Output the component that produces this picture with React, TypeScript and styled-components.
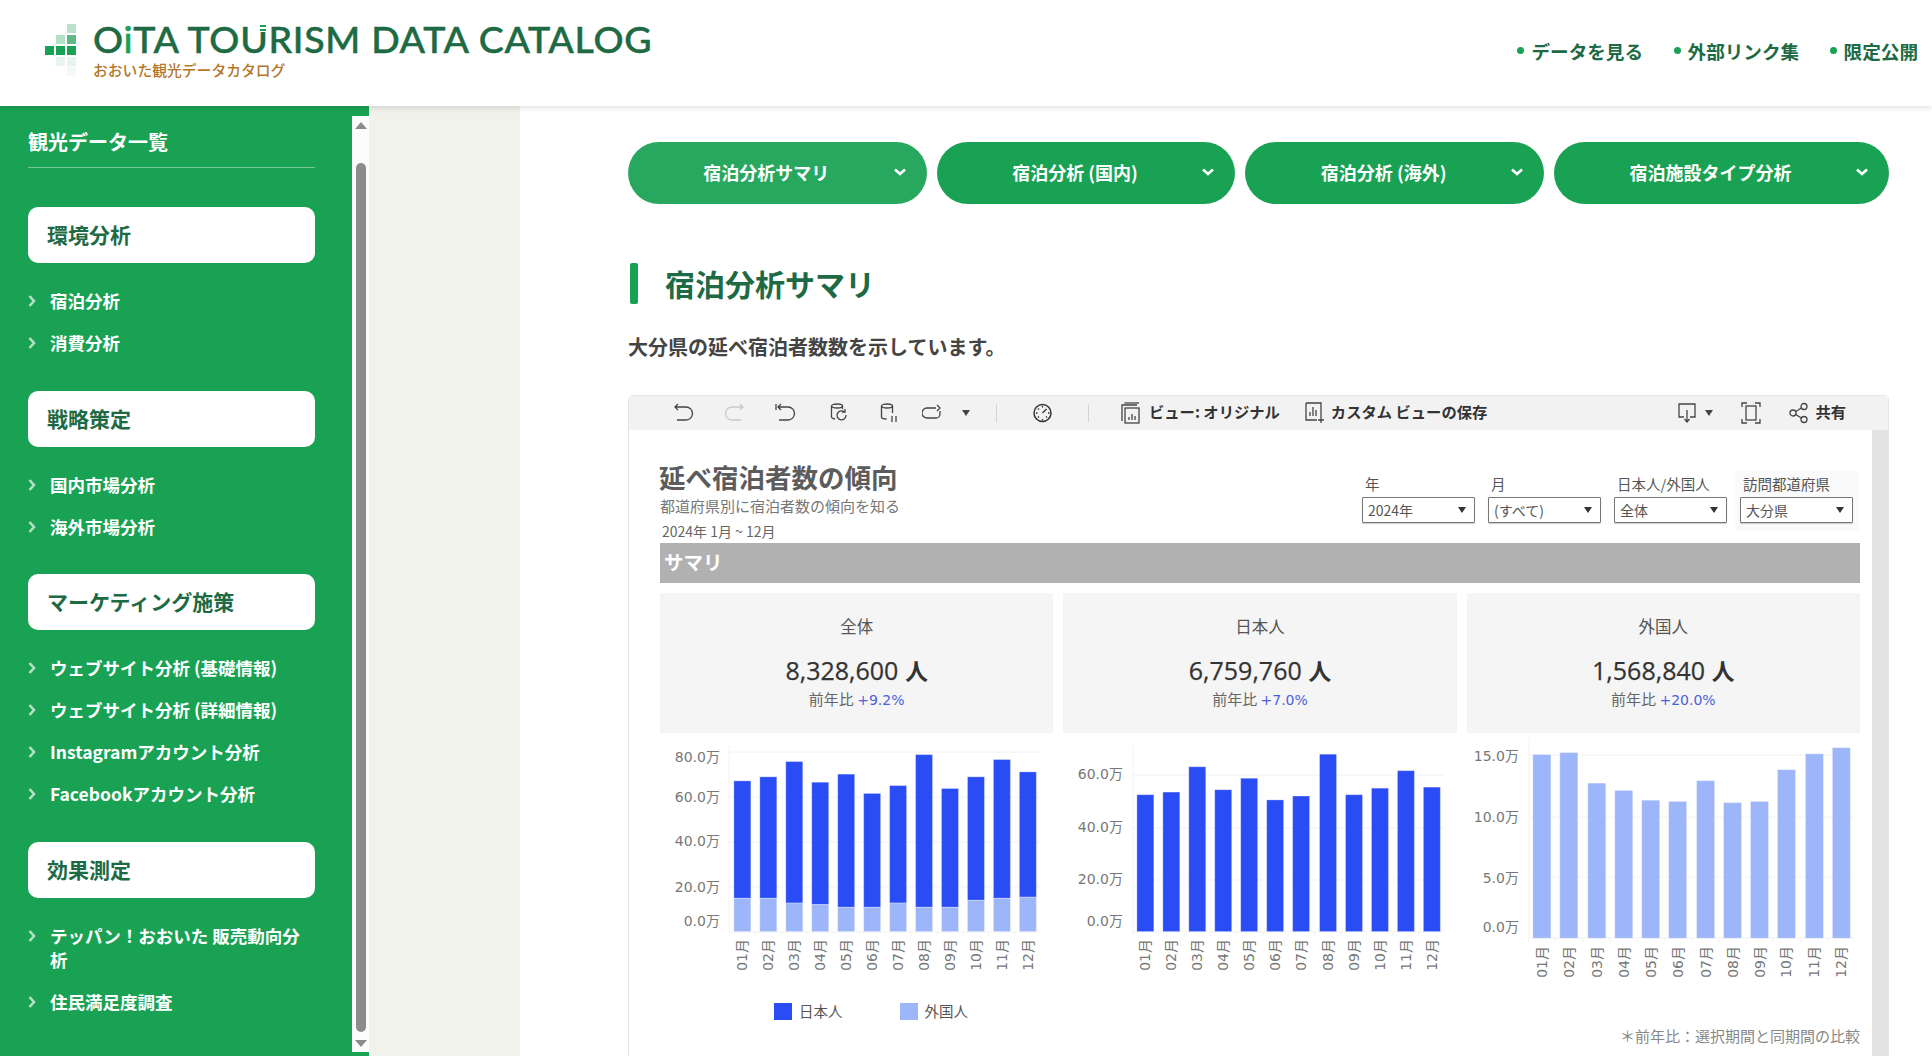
import React from 'react'
import styled, { createGlobalStyle } from 'styled-components'

const JP = '"Noto Sans CJK JP", "Noto Sans", sans-serif'
const NUM = '"DejaVu Sans", "Noto Sans CJK JP", sans-serif'

const GlobalStyle = createGlobalStyle`
  html, body {
    margin: 0;
    height: 100%;
    overflow: hidden;
    background: #fff;
    font-family: ${JP};
  }
  * { box-sizing: border-box; }
`

interface NavGroup {
  title: string
  items: string[]
}

const navGroups: NavGroup[] = [
  { title: '環境分析', items: ['宿泊分析', '消費分析'] },
  { title: '戦略策定', items: ['国内市場分析', '海外市場分析'] },
  {
    title: 'マーケティング施策',
    items: ['ウェブサイト分析 (基礎情報)', 'ウェブサイト分析 (詳細情報)', 'Instagramアカウント分析', 'Facebookアカウント分析'],
  },
  { title: '効果測定', items: ['テッパン！おおいた 販売動向分析', '住民満足度調査'] },
]

const tabs = ['宿泊分析サマリ', '宿泊分析 (国内)', '宿泊分析 (海外)', '宿泊施設タイプ分析']

const filters = [
  { label: '年', value: '2024年' },
  { label: '月', value: '(すべて)' },
  { label: '日本人/外国人', value: '全体' },
  { label: '訪問都道府県', value: '大分県', active: true },
]

const kpis = [
  { label: '全体', value: '8,328,600', diff: '+9.2%' },
  { label: '日本人', value: '6,759,760', diff: '+7.0%' },
  { label: '外国人', value: '1,568,840', diff: '+20.0%' },
]

const months = ['01月', '02月', '03月', '04月', '05月', '06月', '07月', '08月', '09月', '10月', '11月', '12月']

const BLUE = '#2a4cf5'
const LIGHT = '#9db5f9'

interface ChartSpec {
  axisLeft: number
  axisRight: number
  axisTop: number
  base: number
  labelRight: number
  barLeft: number
  barStep: number
  barWidth: number
  scale: number
  monthBottom: number
  ticks: { label: string; grid: number; text: number }[]
  main: number[]
  main2?: number[]
  color: string
}

const charts: ChartSpec[] = [
  {
    axisLeft: 69,
    axisRight: 381,
    axisTop: 12,
    base: 197.7,
    labelRight: 60,
    barLeft: 74,
    barStep: 26,
    barWidth: 17,
    scale: 2.25,
    monthBottom: 237,
    ticks: [
      { label: '80.0万', grid: 18, text: 24 },
      { label: '60.0万', grid: 63, text: 64 },
      { label: '40.0万', grid: 108, text: 108 },
      { label: '20.0万', grid: 153, text: 154 },
      { label: '0.0万', grid: 198, text: 188 },
    ],
    main: [67.1, 68.9, 75.7, 66.5, 70.1, 61.5, 65, 78.8, 63.7, 68.9, 76.6, 71.1],
    main2: [14.8, 14.8, 12.7, 12, 10.8, 10.8, 12.7, 10.8, 10.8, 13.9, 14.8, 15.3],
    color: BLUE,
  },
  {
    axisLeft: 70,
    axisRight: 381,
    axisTop: 12,
    base: 197.7,
    labelRight: 60,
    barLeft: 74.3,
    barStep: 26.03,
    barWidth: 17,
    scale: 2.617,
    monthBottom: 237,
    ticks: [
      { label: '60.0万', grid: 41, text: 41 },
      { label: '40.0万', grid: 94, text: 94 },
      { label: '20.0万', grid: 146, text: 146 },
      { label: '0.0万', grid: 198, text: 188 },
    ],
    main: [52.4, 53.4, 63.1, 54.3, 58.7, 50.4, 51.9, 67.9, 52.4, 54.9, 61.6, 55.3],
    color: BLUE,
  },
  {
    axisLeft: 62,
    axisRight: 387,
    axisTop: 3,
    base: 204.3,
    labelRight: 52,
    barLeft: 66,
    barStep: 27.27,
    barWidth: 18,
    scale: 12.23,
    monthBottom: 244,
    ticks: [
      { label: '15.0万', grid: 21, text: 23 },
      { label: '10.0万', grid: 83, text: 84 },
      { label: '5.0万', grid: 143, text: 145 },
      { label: '0.0万', grid: 204, text: 194 },
    ],
    main: [15.04, 15.2, 12.7, 12.1, 11.3, 11.2, 12.9, 11.1, 11.2, 13.8, 15.1, 15.6],
    color: LIGHT,
  },
]

const BarChart = ({ spec }: { spec: ChartSpec }) => {
  return (
    <ChartSvg viewBox="0 0 394 262">
      <line x1={spec.axisLeft} x2={spec.axisLeft} y1={spec.axisTop} y2={spec.base} stroke="#f3f3f3" />
      {spec.ticks.map((t) => (
        <g key={t.label}>
          <line x1={spec.axisLeft} x2={spec.axisRight} y1={t.grid} y2={t.grid} stroke="#f4f4f4" strokeWidth="1.2" />
          <AxisText x={spec.labelRight} y={t.text} textAnchor="end" dominantBaseline="middle">
            {t.label}
          </AxisText>
        </g>
      ))}
      {spec.main.map((v, i) => {
        const x = Math.round(spec.barLeft + i * spec.barStep)
        const top = spec.base - v * spec.scale
        const low = spec.main2 ? spec.main2[i] * spec.scale : 0
        const cx = x + spec.barWidth / 2
        return (
          <g key={months[i]}>
            <rect
              x={x}
              y={top}
              width={spec.barWidth}
              height={v * spec.scale - low}
              fill={spec.color}
              stroke="#fff"
              strokeOpacity="0.3"
            />
            {spec.main2 && (
              <rect x={x} y={spec.base - low} width={spec.barWidth} height={low} fill={LIGHT} stroke="#fff" strokeOpacity="0.3" />
            )}
            <line x1={x - 4.5} x2={x - 4.5} y1={spec.base} y2={spec.base + 4} stroke="#f3f3f3" />
            <MonthText x={0} y={0} transform={`translate(${cx + 5} ${spec.monthBottom}) rotate(-90)`}>
              {months[i]}
            </MonthText>
          </g>
        )
      })}
    </ChartSvg>
  )
}

const LogoMark = () => (
  <svg width="32" height="52" viewBox="0 0 32 52">
    <rect x="22" y="0" width="9" height="9" fill="#bde0cc" />
    <rect x="11" y="11" width="9" height="9" fill="#b5e0c8" />
    <rect x="22" y="11" width="9" height="9" fill="#62b985" />
    <rect x="0" y="22" width="9" height="9" fill="#19a253" />
    <rect x="11" y="22" width="9" height="9" fill="#19a253" />
    <rect x="22" y="22" width="9" height="9" fill="#19a253" />
    <rect x="11" y="33" width="9" height="9" fill="#e8f5ee" />
    <rect x="22" y="33" width="9" height="9" fill="#e8f5ee" />
    <rect x="22" y="43" width="9" height="9" fill="#f3f9f6" />
  </svg>
)

const Chevron = () => (
  <svg width="12" height="8" viewBox="0 0 12 8">
    <path d="M1 1.500 6 6l5-4.500" fill="none" stroke="#fff" strokeWidth="2.600" />
  </svg>
)

const ItemArrow = () => (
  <svg width="8" height="12" viewBox="0 0 8 12">
    <path d="M1.500 1 6 6l-4.500 5" fill="none" stroke="#b5e0c8" strokeWidth="2.600" />
  </svg>
)

const ToolSvg = ({ w, ml, children, color }: { w: number; ml?: number; children: React.ReactNode; color?: string }) => (
  <ToolIcon
    $ml={ml || 0}
    width={w}
    height="22"
    viewBox={`0 0 ${w} 22`}
    fill="none"
    stroke={color || '#444'}
    strokeWidth="1.300"
  >
    {children}
  </ToolIcon>
)

const Caret = ({ ml }: { ml: number }) => <ToolCaret $ml={ml} />

const App = () => {
  return (
    <Page>
      <GlobalStyle />
      <Header>
        <Logo>
          <LogoMark />
          <LogoText>
            <LogoTitle>
              O<em>i</em>TA TO<LogoU>U</LogoU>RISM DATA CATALOG
            </LogoTitle>
            <LogoSub>おおいた観光データカタログ</LogoSub>
          </LogoText>
        </Logo>
        <HeaderNav>
          <HeaderLink>データを見る</HeaderLink>
          <HeaderLink>外部リンク集</HeaderLink>
          <HeaderLink>限定公開</HeaderLink>
        </HeaderNav>
      </Header>

      <Body>
        <Sidebar>
          <SideInner>
            <SideHeading>観光データ一覧</SideHeading>
            {navGroups.map((g) => (
              <div key={g.title}>
                <GroupCard>{g.title}</GroupCard>
                <GroupList>
                  {g.items.map((item) => (
                    <GroupItem key={item}>
                      <ItemArrow />
                      <span>{item}</span>
                    </GroupItem>
                  ))}
                </GroupList>
              </div>
            ))}
          </SideInner>
          <SideScroll>
            <ArrowUp />
            <Thumb />
            <ArrowDown />
          </SideScroll>
        </Sidebar>

        <Gutter />

        <Main>
          <Tabs>
            {tabs.map((t, i) => (
              <Tab key={t} $active={i === 0}>
                <span>{t}</span>
                <Chevron />
              </Tab>
            ))}
          </Tabs>
          <PageTitle>宿泊分析サマリ</PageTitle>
          <Lead>大分県の延べ宿泊者数数を示しています。</Lead>

          <Viz>
            <VizToolbar>
              <ToolSvg w={21} ml={44}>
                <path d="M5 2 2 5l3 3M2 5h11a6 6 0 0 1 0 13H4" />
              </ToolSvg>
              <ToolSvg w={21} ml={30} color="#c9c9c9">
                <path d="M16 2l3 3-3 3M19 5H8a6 6 0 0 0 0 13h9" />
              </ToolSvg>
              <ToolSvg w={21} ml={30}>
                <path d="M1 2v6M6 2 3 5l3 3M3 5h10a6 6 0 0 1 0 13H4" />
              </ToolSvg>
              <ToolSvg w={18} ml={34}>
                <ellipse cx="7" cy="4" rx="5.500" ry="2" />
                <path d="M1.500 4v11c0 1 1.500 1.600 3.500 2M12.500 4v3" />
                <path d="M16 13a4.500 4.500 0 1 1-1.500-3M15 7v3h-3" />
              </ToolSvg>
              <ToolSvg w={18} ml={32}>
                <ellipse cx="7" cy="4" rx="5.500" ry="2" />
                <path d="M1.500 4v11c0 1 2 2 5 2M12.500 4v7M12 14v6M16 14v6" />
              </ToolSvg>
              <ToolSvg w={21} ml={24}>
                <path d="M14 6H5a4 4 0 0 0 0 10h9a4 4 0 0 0 4-4V9M15 3l3 3-3 3" />
              </ToolSvg>
              <Caret ml={19} />
              <ToolSep $ml={26} />
              <ToolSvg w={19} ml={36} color="#333">
                <circle cx="9.500" cy="11" r="8.500" strokeWidth="1.500" />
                <path d="M9.500 11l4-4M9.500 4v1.500M9.500 17v1.500M3 11h1.500M15 11h1.500M5 6.500l1 1M5 15.500l1-1M14 15.500l-1-1" />
              </ToolSvg>
              <ToolSep $ml={36} />
              <ToolSvg w={19} ml={32}>
                <path d="M1 19V3h15" />
                <path d="M3.500 1H18" />
                <rect x="4" y="6" width="14" height="15" />
                <path d="M8 18v-3M11 18v-6M14 18v-4" />
              </ToolSvg>
              <ToolLabel $ml={9}>ビュー: オリジナル</ToolLabel>
              <ToolSvg w={20} ml={25}>
                <path d="M1 1h15v14M1 1v17h11" />
                <path d="M5 14v-4M8 14V5M11 14V8M16 15v6M13 18h6" />
              </ToolSvg>
              <ToolLabel $ml={6}>カスタム ビューの保存</ToolLabel>
              <ToolRight>
                <ToolSvg w={18}>
                  <path d="M6 15H1V2h16v13h-5M9 8v11M6.500 17 9 20l2.500-3" />
                </ToolSvg>
                <Caret ml={9} />
                <ToolSvg w={20} ml={28}>
                  <path d="M1 5V1h5M14 1h5v4M19 17v4h-5M6 21H1v-4" />
                  <rect x="5" y="4" width="10" height="14" />
                </ToolSvg>
                <ToolSvg w={20} ml={28}>
                  <circle cx="4" cy="11" r="3" />
                  <circle cx="15" cy="4.500" r="3" />
                  <circle cx="15" cy="17.500" r="3" />
                  <path d="M6.800 9.500 12.300 6M6.800 12.500l5.500 3.500" />
                </ToolSvg>
                <ToolLabel $ml={6}>共有</ToolLabel>
              </ToolRight>
            </VizToolbar>

            <VizBody>
              <VizContent>
                <VizHead>
                  <VizTitles>
                    <VizTitle>延べ宿泊者数の傾向</VizTitle>
                    <VizSub>都道府県別に宿泊者数の傾向を知る</VizSub>
                    <VizDate>2024年 1月 ~ 12月</VizDate>
                  </VizTitles>
                  <Filters>
                    {filters.map((f) => (
                      <Filter key={f.label} $active={!!f.active}>
                        <FilterLabel>{f.label}</FilterLabel>
                        <FilterSelect>
                          <span>{f.value}</span>
                          <SelectCaret />
                        </FilterSelect>
                      </Filter>
                    ))}
                  </Filters>
                </VizHead>

                <SectionBar>サマリ</SectionBar>

                <ThreeCols>
                  {kpis.map((k) => (
                    <KpiCard key={k.label}>
                      <KpiLabel>{k.label}</KpiLabel>
                      <KpiValue>
                        {k.value} <b>人</b>
                      </KpiValue>
                      <KpiDiff>
                        前年比 <i>{k.diff}</i>
                      </KpiDiff>
                    </KpiCard>
                  ))}
                </ThreeCols>

                <ChartCols>
                  {charts.map((c, i) => (
                    <BarChart key={i} spec={c} />
                  ))}
                </ChartCols>

                <Legend>
                  <LegendItem $color={BLUE}>日本人</LegendItem>
                  <LegendItem $color={LIGHT}>外国人</LegendItem>
                </Legend>
                <Footnote>＊前年比：選択期間と同期間の比較</Footnote>
              </VizContent>
              <VizScroll />
            </VizBody>
          </Viz>
        </Main>
      </Body>
    </Page>
  )
}

const Page = styled.div`
  display: flex;
  flex-direction: column;
  height: 100vh;
  overflow: hidden;
`

const Header = styled.header`
  position: relative;
  z-index: 2;
  flex: 0 0 106px;
  display: flex;
  justify-content: space-between;
  padding: 0 14px 0 45px;
  background: #fff;
  box-shadow: 0 2px 6px rgba(0, 0, 0, 0.12);
`

const Logo = styled.div`
  display: flex;
  align-items: flex-start;
  padding-top: 24px;

  svg {
    flex: none;
  }
`

const LogoText = styled.div`
  margin-left: 16px;
`

const LogoTitle = styled.div`
  font-family: Lato, sans-serif;
  font-size: 37.500px;
  font-weight: 500;
  line-height: 36px;
  letter-spacing: 0.700px;
  -webkit-text-stroke: 0.500px #1d6a44;
  color: #1d6a44;
  white-space: nowrap;
  margin-top: -3px;

  em {
    font-style: normal;
    color: #19a253;
    -webkit-text-stroke: 0.500px #19a253;
  }
`

/* the right stem of the U is cut by two small white gaps in the wordmark */
const LogoU = styled.span`
  position: relative;

  &::after {
    content: '';
    position: absolute;
    right: 3px;
    top: 9px;
    width: 6px;
    height: 7px;
    background: repeating-linear-gradient(#19a253 0 2px, #fff 2px 3.500px);
  }
`

const LogoSub = styled.div`
  font-size: 14.800px;
  font-weight: 500;
  line-height: 20px;
  color: #b5762a;
  margin-top: 3px;
`

const HeaderNav = styled.nav`
  display: flex;
  gap: 30.500px;
  padding-top: 36px;
`

const HeaderLink = styled.a`
  display: flex;
  align-items: center;
  height: 28px;
  font-size: 18.600px;
  font-weight: 700;
  color: #1d6a44;

  &::before {
    content: '';
    width: 7px;
    height: 7px;
    margin-right: 7px;
    border-radius: 50%;
    background: #19a253;
  }
`

const Body = styled.div`
  flex: 1;
  display: flex;
  min-height: 0;
`

const Sidebar = styled.aside`
  flex: 0 0 369px;
  display: flex;
  align-items: flex-start;
  padding-top: 10px;
  background: #19a253;
  overflow: hidden;
`

const SideInner = styled.div`
  width: 352px;
  padding: 11px 37px 0 28px;
`

const SideHeading = styled.div`
  height: 41px;
  margin-bottom: 39px;
  font-size: 20px;
  font-weight: 700;
  line-height: 30px;
  color: #fff;
  border-bottom: 1px solid rgba(255, 255, 255, 0.4);
`

const GroupCard = styled.div`
  height: 56px;
  margin-top: 35.500px;
  padding-left: 19px;
  border-radius: 10px;
  background: #fff;
  font-size: 21px;
  font-weight: 700;
  line-height: 55px;
  color: #1d6a44;
`

const GroupList = styled.ul`
  list-style: none;
  margin: 26px 0 0;
  padding: 0;
`

const GroupItem = styled.li`
  display: flex;
  align-items: flex-start;
  margin-bottom: 18px;
  font-size: 17.500px;
  font-weight: 700;
  line-height: 24px;
  color: #fff;

  &:last-child {
    margin-bottom: 0;
  }

  svg {
    flex: none;
    margin: 6px 14px 0 0;
  }
`

const SideScroll = styled.div`
  flex: 0 0 17px;
  height: 936px;
  display: flex;
  flex-direction: column;
  align-items: center;
  background: #fbfbfb;
`

const ArrowUp = styled.div`
  width: 0;
  height: 0;
  margin-top: 6px;
  border: 6px solid transparent;
  border-top: 0;
  border-bottom: 7px solid #8c8c8c;
`

const Thumb = styled.div`
  width: 10px;
  height: 869px;
  margin-top: 34px;
  border-radius: 5px;
  background: #8c8c8c;
`

const ArrowDown = styled.div`
  width: 0;
  height: 0;
  margin-top: 8px;
  border: 6px solid transparent;
  border-bottom: 0;
  border-top: 7px solid #8c8c8c;
`

const Gutter = styled.div`
  flex: 0 0 151px;
  background: #f1f2eb;
`

const Main = styled.main`
  flex: 1;
  min-width: 0;
  padding: 36px 43px 0 108px;
  background: #fff;
`

const Tabs = styled.div`
  display: grid;
  grid-template-columns: 1fr 1fr 1fr 335px;
  gap: 10px;
`

const Tab = styled.div<{ $active: boolean }>`
  height: 62px;
  display: flex;
  align-items: center;
  padding: 0 21px 2px 11px;
  border-radius: 31px;
  background: ${({ $active }) => ($active ? '#27a85e' : '#19a253')};
  color: #fff;
  font-size: 18px;
  font-weight: 700;

  span {
    flex: 1;
    text-align: center;
  }
`

const PageTitle = styled.h1`
  display: flex;
  align-items: center;
  height: 41px;
  margin: 59px 0 0 2px;
  padding-bottom: 2px;
  font-size: 30px;
  font-weight: 700;
  line-height: 36px;
  color: #1d6a44;

  &::before {
    content: '';
    align-self: flex-start;
    width: 8px;
    height: 41px;
    margin-right: 27px;
    border-radius: 2px;
    background: #19a253;
  }
`

const Lead = styled.p`
  margin: 30px 0 0;
  font-size: 20px;
  font-weight: 700;
  line-height: 26px;
  color: #444;
`

const Viz = styled.section`
  margin-top: 35px;
  border: 1px solid #e6e6e6;
  border-bottom: 0;
  border-radius: 5px 5px 0 0;
`

const VizToolbar = styled.div`
  height: 34px;
  display: flex;
  align-items: center;
  background: #f2f2f2;
  padding-right: 42px;
`

const ToolIcon = styled.svg<{ $ml: number }>`
  flex: none;
  margin-left: ${({ $ml }) => $ml}px;
`

const ToolCaret = styled.span<{ $ml: number }>`
  flex: none;
  margin-left: ${({ $ml }) => $ml}px;
  border: 4.500px solid transparent;
  border-bottom: 0;
  border-top: 6px solid #444;
`

const ToolSep = styled.span<{ $ml: number }>`
  width: 1px;
  height: 18px;
  margin-left: ${({ $ml }) => $ml}px;
  background: #d4d4d4;
`

const ToolLabel = styled.span<{ $ml: number }>`
  margin-left: ${({ $ml }) => $ml}px;
  padding-bottom: 4px;
  font-size: 15.300px;
  font-weight: 700;
  color: #333;
  white-space: nowrap;
`

const ToolRight = styled.div`
  margin-left: auto;
  display: flex;
  align-items: center;
`

const VizBody = styled.div`
  display: flex;
  height: 640px;
`

const VizContent = styled.div`
  flex: 1;
  min-width: 0;
  padding: 0 12px 0 31px;
`

const VizScroll = styled.div`
  flex: 0 0 16px;
  background: #e3e3e3;
`

const VizHead = styled.div`
  height: 113px;
  display: flex;
  justify-content: space-between;
`

const VizTitles = styled.div`
  padding-top: 32px;
`

const VizTitle = styled.div`
  margin-left: -1px;
  font-size: 26.500px;
  font-weight: 700;
  line-height: 30px;
  color: #5c5c5c;
`

const VizSub = styled.div`
  margin-top: 3px;
  font-size: 15px;
  line-height: 22px;
  color: #777;
`

const VizDate = styled.div`
  margin: 4px 0 0 2px;
  font-size: 14px;
  line-height: 20px;
  color: #666;
`

const Filters = styled.div`
  display: flex;
  gap: 2px;
  padding-top: 41px;
  margin-right: 1px;
`

const Filter = styled.div<{ $active: boolean }>`
  width: 124px;
  height: 60px;
  padding: 3px 6px 0 5px;
  background: ${({ $active }) => ($active ? '#fafafa' : 'transparent')};
`

const FilterLabel = styled.div`
  padding-left: 3px;
  font-size: 14.500px;
  line-height: 20px;
  color: #555;
  white-space: nowrap;
`

const FilterSelect = styled.div`
  height: 26px;
  margin-top: 3px;
  display: flex;
  align-items: center;
  justify-content: space-between;
  padding: 0 8px 0 5px;
  border: 1px solid #777;
  border-radius: 1px;
  background: #fff;
  box-shadow: 0 1px 1px rgba(0, 0, 0, 0.2);
  font-size: 14px;
  color: #555;
`

const SelectCaret = styled.i`
  border: 4px solid transparent;
  border-bottom: 0;
  border-top: 6px solid #333;
`

const SectionBar = styled.div`
  height: 40px;
  padding-left: 4px;
  background: #b1b1b1;
  font-size: 19.500px;
  font-weight: 700;
  line-height: 37px;
  color: #fff;
`

const ThreeCols = styled.div`
  display: grid;
  grid-template-columns: repeat(3, 1fr);
  gap: 10px;
  margin-top: 10px;
`

const ChartCols = styled(ThreeCols)`
  margin-top: 1px;
  height: 262px;
`

const KpiCard = styled.div`
  height: 140px;
  padding-top: 22px;
  background: #f5f5f5;
  text-align: center;
`

const KpiLabel = styled.div`
  font-size: 16.500px;
  line-height: 22px;
  color: #555;
`

const KpiValue = styled.div`
  margin-top: 19px;
  font-family: "Open Sans", ${JP};
  font-size: 25px;
  line-height: 28px;
  color: #333;
  -webkit-text-stroke: 0.250px #333;

  b {
    font-family: ${JP};
    font-size: 23px;
    font-weight: 700;
    -webkit-text-stroke: 0;
  }
`

const KpiDiff = styled.div`
  margin-top: 5px;
  font-family: ${JP};
  font-size: 15px;
  line-height: 20px;
  color: #666;

  i {
    font-family: ${NUM};
    font-style: normal;
    font-size: 14px;
    color: #4c5fe0;
  }
`

const ChartSvg = styled.svg`
  display: block;
  width: 100%;
  height: 262px;
`

const AxisText = styled.text`
  font-family: ${NUM};
  font-size: 14px;
  fill: #777;
`

const MonthText = styled.text`
  font-family: ${NUM};
  font-size: 14px;
  fill: #777;
`

const Legend = styled.div`
  display: flex;
  gap: 57px;
  padding-left: 114px;
  margin-top: 6px;
`

const LegendItem = styled.div<{ $color: string }>`
  display: flex;
  align-items: center;
  font-size: 14.500px;
  line-height: 18px;
  color: #555;

  &::before {
    content: '';
    width: 18px;
    height: 17px;
    margin-right: 7px;
    background: ${({ $color }) => $color};
  }
`

const Footnote = styled.div`
  margin-top: 5px;
  text-align: right;
  font-size: 15px;
  line-height: 22px;
  color: #888;
`

export default App
